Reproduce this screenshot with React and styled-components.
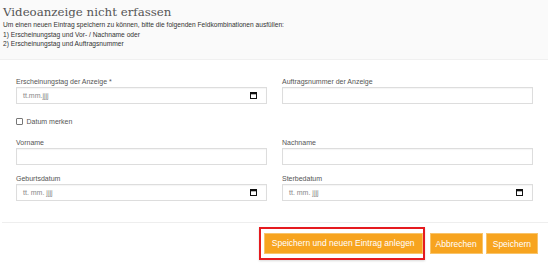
import React from 'react'
import styled, { createGlobalStyle } from 'styled-components'

const GlobalStyle = createGlobalStyle`
  html, body {
    margin: 0;
    padding: 0;
    background: #fff;
    font-family: "Liberation Sans", Arial, sans-serif;
  }
`

const Page = styled.div`
  width: 548px;
  height: 271px;
  overflow: hidden;
  background: #fff;
`

const Header = styled.header`
  background: #fafafa;
  border-bottom: 1px solid #f0f0f0;
  padding: 5px 3px 10.5px;
  h1 {
    margin: 0;
    font-family: "DejaVu Serif", "Liberation Serif", serif;
    font-weight: normal;
    font-size: 11.8px;
    line-height: 15px;
    color: #555;
  }
  p {
    margin: 0;
    font-size: 6.65px;
    line-height: 9.5px;
    color: #333;
  }
`

const Form = styled.div`
  display: grid;
  grid-template-columns: 251px 251px;
  column-gap: 15px;
  row-gap: 10px;
  padding: 18px 15px 21px 16px;
`

const Field = styled.div`
  display: flex;
  flex-direction: column;
`

const Label = styled.label`
  font-size: 7px;
  line-height: 8px;
  color: #555;
  margin-bottom: 1px;
`

const Input = styled.div`
  box-sizing: border-box;
  height: 17px;
  border: 1px solid #ddd;
  box-shadow: inset 0 1px 1px rgba(0, 0, 0, 0.04);
  background: #fff;
  display: flex;
  align-items: center;
  justify-content: space-between;
  padding: 0 9px 0 6px;
  font-size: 7px;
  color: #888;
`

const CheckRow = styled.div`
  grid-column: 1 / 2;
  display: flex;
  align-items: center;
  gap: 4px;
  padding: 3px 0;
  font-size: 7px;
  line-height: 9px;
  color: #555;
`

const Box = styled.span`
  box-sizing: border-box;
  width: 6.5px;
  height: 6.5px;
  border: 1px solid #777;
  border-radius: 1px;
  background: #fff;
`

const Spacer = styled.div``

const Divider = styled.div`
  height: 1px;
  background: #eee;
  margin-left: 2px;
`

const Footer = styled.footer`
  display: flex;
  justify-content: flex-end;
  align-items: center;
  gap: 3px;
  padding: 4px 10px 0 0;
`

const Highlight = styled.div`
  border: 2.5px solid #e51a1f;
  padding: 3.5px 0 4.5px 2.5px;
  margin-right: 2px;
  display: flex;
  box-shadow: 0 1px 2px rgba(0, 0, 0, 0.15);
`

const Button = styled.button`
  height: 21px;
  padding: 0 ${p => p.$pad}px;
  border: 1px solid #f9c46a;
  background: #f7a41f;
  color: #fff;
  font-family: "Liberation Sans", Arial, sans-serif;
  font-size: 8.5px;
  cursor: pointer;
`

const Calendar = () => (
  <svg width="7" height="7" viewBox="0 0 7 7">
    <rect x="0.5" y="0.5" width="6" height="6" fill="none" stroke="#111" />
    <rect x="0.5" y="0.5" width="6" height="1.8" fill="#111" />
  </svg>
)

const DateInput = ({ text }) => (
  <Input>
    <span>{text}</span>
    <Calendar />
  </Input>
)

export default function App() {
  return (
    <Page>
      <GlobalStyle />
      <Header>
        <h1>Videoanzeige nicht erfassen</h1>
        <p>Um einen neuen Eintrag speichern zu können, bitte die folgenden Feldkombinationen ausfüllen:</p>
        <p>1) Erscheinungstag und Vor- / Nachname oder</p>
        <p>2) Erscheinungstag und Auftragsnummer</p>
      </Header>
      <Form>
        <Field>
          <Label>Erscheinungstag der Anzeige *</Label>
          <DateInput text="tt.mm.jjjj" />
        </Field>
        <Field>
          <Label>Auftragsnummer der Anzeige</Label>
          <Input />
        </Field>
        <CheckRow>
          <Box />
          Datum merken
        </CheckRow>
        <Spacer />
        <Field>
          <Label>Vorname</Label>
          <Input />
        </Field>
        <Field>
          <Label>Nachname</Label>
          <Input />
        </Field>
        <Field>
          <Label>Geburtsdatum</Label>
          <DateInput text="tt. mm. jjjj" />
        </Field>
        <Field>
          <Label>Sterbedatum</Label>
          <DateInput text="tt. mm. jjjj" />
        </Field>
      </Form>
      <Divider />
      <Footer>
        <Highlight>
          <Button $pad={7}>Speichern und neuen Eintrag anlegen</Button>
        </Highlight>
        <Button $pad={5}>Abbrechen</Button>
        <Button $pad={6}>Speichern</Button>
      </Footer>
    </Page>
  )
}
